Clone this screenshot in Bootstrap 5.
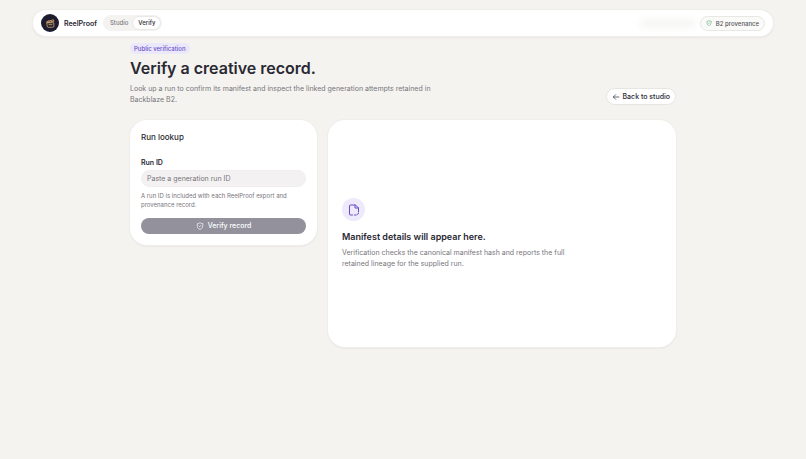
<!DOCTYPE html>
<html lang="en">
<head>
<meta charset="utf-8">
<meta name="viewport" content="width=device-width, initial-scale=1">
<title>ReelProof – Verify</title>
<link rel="stylesheet" href="https://cdn.jsdelivr.net/npm/bootstrap@5.3.0/dist/css/bootstrap.min.css">
<style>
body{background:#f4f3ef;color:#292833;font-family:Inter,"Liberation Sans",sans-serif;font-size:7px;line-height:11px}
.shell{padding-top:10px}
.topbar{max-width:740px;min-height:26px;border-radius:13px;background:#fff;box-shadow:0 0 0 1px #eeedea,0 1px 3px #0000001c;padding:0 8px}
.brand{color:#292833;font-size:7px;font-weight:600;gap:5px}
.brand-mark{width:18px;height:18px;border-radius:50%;background:#1e1d30}
.switch{background:#f4f3f1;border-radius:9px;padding:2px;margin-left:6px}
.switch a{font-size:6px;font-weight:500;line-height:12px;padding:0 5px;border-radius:7px;color:#7c7a80}
.switch a.active{background:#fff;color:#292833;box-shadow:0 0 2px #00000026}
.account{width:56px;height:9px;border-radius:5px;background:#f6f6f5;filter:blur(3px)}
.status{font-size:6px;font-weight:500;line-height:13px;border:1px solid #e7e7e3;border-radius:8px;background:#fafaf8;padding:0 5px;gap:4px;color:#55545b}
.page{max-width:546px;padding-top:7px}
.eyebrow{background:#ece8fb;color:#6a51c7;font-size:6px;font-weight:500;border-radius:6px;padding:0 4px;line-height:11px}
h1{font-size:16px;line-height:22px;font-weight:600;margin:3px 0 4px}
.soft{color:#77757c}
.intro{max-width:306px}
.back{background:#fff;border:1px solid #e7e5e2;border-radius:9px;color:#292833;font-weight:500;padding:0 5px;line-height:15px;gap:3px}
.panels{display:grid;grid-template-columns:187fr 348fr;gap:11px;margin-top:15px}
.panel{background:#fff;border-radius:17px;box-shadow:0 0 0 1px #efeeeb,0 1px 2px #00000020}
.lookup{padding:11px}
h2{font-size:8px;line-height:12px;font-weight:500;margin:0 0 15px}
.field-label{font-weight:600;line-height:10px;margin-bottom:2px}
.run-input{border:1px solid #f0eeee;background:#f3f1f1;border-radius:9px;font-size:7px;line-height:11px;padding:2px 5px;min-height:17px;color:#292833}
.run-input::placeholder{color:#77757c}
.hint{font-size:6px;line-height:9px;margin:4px 0 9px}
.verify{background:#92919c;border:0;border-radius:8px;color:#fff;font-size:7px;font-weight:500;line-height:16px;padding:0;gap:4px}
.empty{min-height:227px;padding:14px}
.empty-icon{width:23px;height:23px;border-radius:50%;background:#eeeafb;color:#6549c4}
h3{font-size:9px;line-height:14px;font-weight:600;margin:9px 0 3px}
.empty-text{max-width:228px}
svg{flex:none;fill:none;stroke:currentColor;stroke-width:2;stroke-linecap:round;stroke-linejoin:round}
</style>
<script defer src="https://cdn.jsdelivr.net/npm/bootstrap@5.3.0/dist/js/bootstrap.bundle.min.js"></script>
</head>
<body>
<div class="shell px-4 pb-4">
<header class="topbar d-flex align-items-center mx-auto">
  <a class="brand d-flex align-items-center text-decoration-none" href="#"><span class="brand-mark d-flex align-items-center justify-content-center"><svg width="9" height="9" viewBox="0 0 24 24" style="color:#e4b16f"><path d="M3 10h18v9a3 3 0 0 1-3 3H6a3 3 0 0 1-3-3ZM3 10 2 7l18-5 1 4L5 10M7 5l3 4M13 4l3 3M8 15h8"/></svg></span>ReelProof</a>
  <nav class="switch d-flex" aria-label="Main"><a href="#" class="text-decoration-none">Studio</a><a href="#" class="active text-decoration-none" aria-current="page">Verify</a></nav>
  <span class="account ms-auto me-1" aria-hidden="true"></span>
  <span class="status d-flex align-items-center"><svg width="6" height="6" viewBox="0 0 24 24" style="color:#4b9b76"><path d="M20 13c0 5-3.500 7.500-8 9-4.500-1.500-8-4-8-9V5c3 0 6-1 8-3 2 2 5 3 8 3ZM9 12l2 2 4-4"/></svg>B2 provenance</span>
</header>
<main class="page mx-auto">
  <div class="d-flex justify-content-between align-items-end">
    <div>
      <span class="eyebrow d-table">Public verification</span>
      <h1>Verify a creative record.</h1>
      <p class="intro soft mb-0">Look up a run to confirm its manifest and inspect the linked generation attempts retained in Backblaze B2.</p>
    </div>
    <a class="back d-flex align-items-center text-decoration-none" href="#"><svg width="8" height="8" viewBox="0 0 24 24"><path d="m11 19-7-7 7-7M4 12h17"/></svg>Back to studio</a>
  </div>
  <div class="panels align-items-start">
    <section class="panel lookup">
      <h2>Run lookup</h2>
      <form>
        <label class="field-label d-block" for="run-id">Run ID</label>
        <input class="run-input form-control" id="run-id" type="text" placeholder="Paste a generation run ID" aria-describedby="run-hint">
        <p class="hint soft" id="run-hint">A run ID is included with each ReelProof export and provenance record.</p>
        <button class="verify btn w-100 d-flex align-items-center justify-content-center" type="button"><svg width="8" height="8" viewBox="0 0 24 24"><path d="M20 13c0 5-3.500 7.500-8 9-4.500-1.500-8-4-8-9V5c3 0 6-1 8-3 2 2 5 3 8 3ZM9 12l2 2 4-4"/></svg>Verify record</button>
      </form>
    </section>
    <section class="panel empty d-flex flex-column justify-content-center">
      <span class="empty-icon d-flex align-items-center justify-content-center"><svg width="12" height="12" viewBox="0 0 24 24"><path d="M9 22H5a2 2 0 0 1-2-2V4a2 2 0 0 1 2-2h10l6 6v8M14 2v6h7M13 22h3M18 21l3-2"/></svg></span>
      <h3>Manifest details will appear here.</h3>
      <p class="empty-text soft mb-0">Verification checks the canonical manifest hash and reports the full retained lineage for the supplied run.</p>
    </section>
  </div>
</main>
</div>
</body>
</html>
